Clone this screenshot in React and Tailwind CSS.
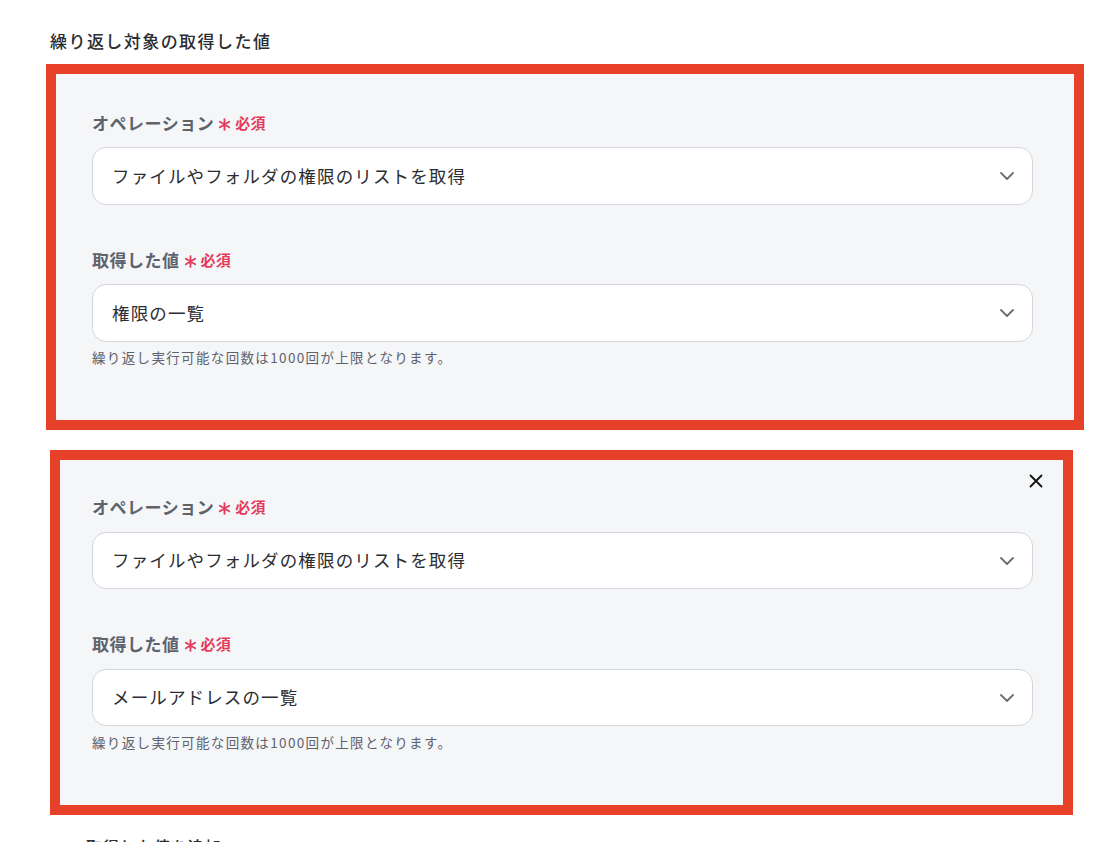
import React from "react";

const font = { fontFamily: '"Noto Sans CJK JP", "Noto Sans", sans-serif' };

function Chevron() {
  return (
    <svg width="14" height="8" viewBox="0 0 14 8" fill="none" className="shrink-0">
      <path d="M1 1l6 6 6-6" stroke="#6b6f76" strokeWidth="1.8" strokeLinecap="round" strokeLinejoin="round" />
    </svg>
  );
}

function Star() {
  return (
    <svg width="13" height="13" viewBox="0 0 12 12" fill="none" className="shrink-0">
      <path d="M6 1v10M1.7 3.5l8.6 5M1.7 8.5l8.6-5" stroke="#e33a5d" strokeWidth="1.7" strokeLinecap="round" />
    </svg>
  );
}

function Label({ text }) {
  return (
    <div className="flex items-center h-6">
      <span className="text-[17px] font-bold text-[#5d626c] tracking-[0.03em]">{text}</span>
      <span className="ml-[4px] mt-[2px] flex items-center"><Star /></span>
      <span className="ml-[4px] text-[15px] font-bold text-[#e33a5d] tracking-[0.02em]">必須</span>
    </div>
  );
}

function Select({ text, h }) {
  return (
    <div className={`flex items-center justify-between bg-white border border-[#d3d6dc] rounded-[14px] pl-[19px] pr-[18px] ${h}`}>
      <span className="text-[17.5px] text-[#2b2d31] tracking-[0.065em]">{text}</span>
      <Chevron />
    </div>
  );
}

function Helper() {
  return (
    <div className="text-[13.5px] text-[#5d626c] tracking-[0.1em] leading-5">
      繰り返し実行可能な回数は1000回が上限となります。
    </div>
  );
}

export default function App() {
  return (
    <div className="w-[1109px] h-[842px] bg-white overflow-hidden relative" style={font}>
      <div className="pl-[50px] pt-[29px] text-[17px] font-medium text-[#2b2d31] tracking-[0.085em] leading-6">
        繰り返し対象の取得した値
      </div>

      <div className="mt-[11px] ml-[46px] w-[1038px] h-[366px] border-[10px] border-[#e8412a] bg-[#f5f6f8] pt-[37px] pl-[36px] pr-[41px]">
        <Label text="オペレーション" />
        <div className="mt-[12px]">
          <Select text="ファイルやフォルダの権限のリストを取得" h="h-[58px]" />
        </div>
        <div className="mt-[43px]">
          <Label text="取得した値" />
        </div>
        <div className="mt-[12px]">
          <Select text="権限の一覧" h="h-[58px]" />
        </div>
        <div className="mt-[5px]">
          <Helper />
        </div>
      </div>

      <div className="relative mt-[20px] ml-[50px] w-[1023px] h-[365px] border-[10px] border-[#e8412a] bg-[#f5f6f8] pt-[35px] pl-[32px] pr-[30px]">
        <svg className="absolute left-[969px] top-[14px]" width="14" height="14" viewBox="0 0 14 14" fill="none">
          <path d="M1.5 1.5l11 11M12.5 1.5l-11 11" stroke="#111" strokeWidth="1.8" strokeLinecap="round" />
        </svg>
        <Label text="オペレーション" />
        <div className="mt-[13px]">
          <Select text="ファイルやフォルダの権限のリストを取得" h="h-[57px]" />
        </div>
        <div className="mt-[43px]">
          <Label text="取得した値" />
        </div>
        <div className="mt-[13px]">
          <Select text="メールアドレスの一覧" h="h-[57px]" />
        </div>
        <div className="mt-[6px]">
          <Helper />
        </div>
      </div>

      <div className="pl-[86px] mt-[19px] text-[16px] font-medium text-[#2b2d31] tracking-[0.06em] leading-6">
        取得した値を追加
      </div>
    </div>
  );
}
